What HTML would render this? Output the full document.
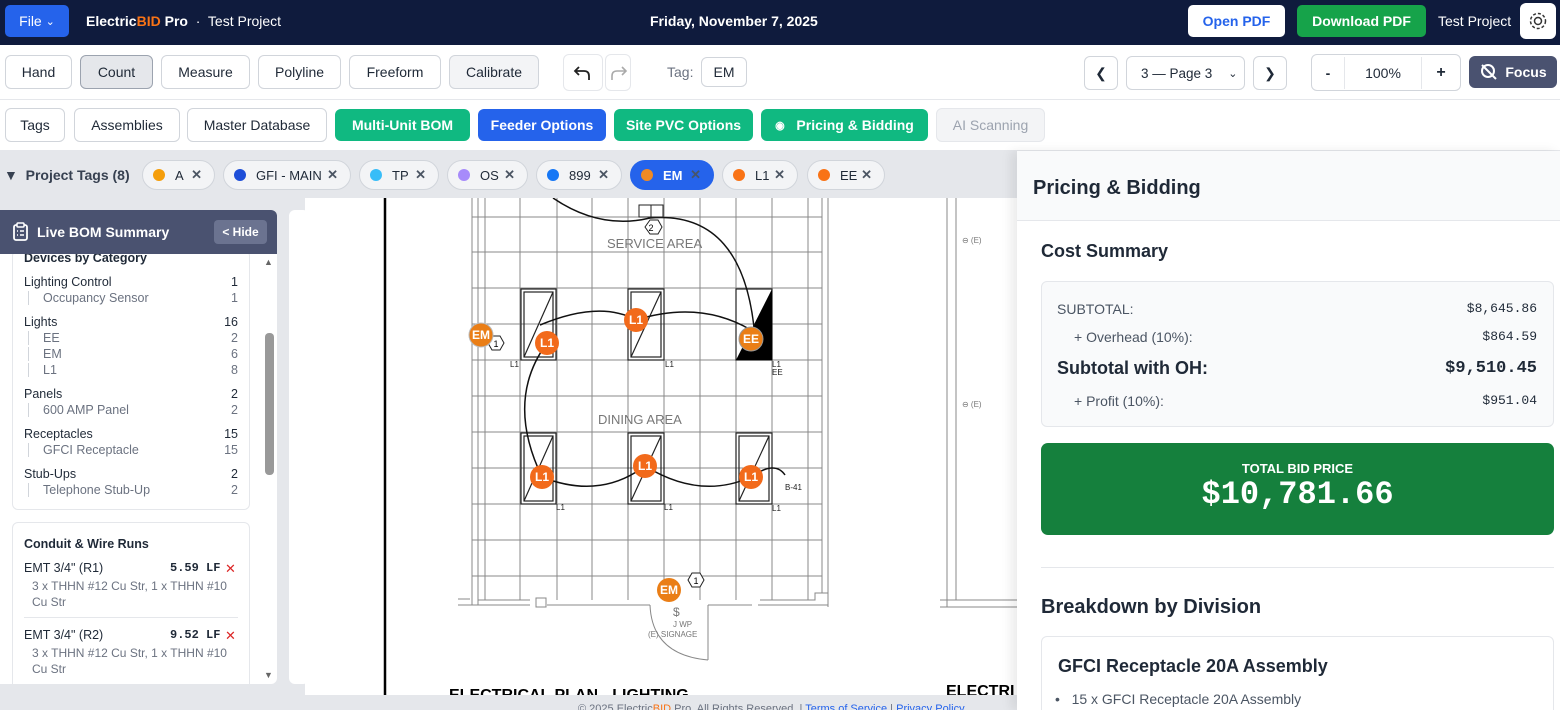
<!DOCTYPE html>
<html style="width:1560px;height:710px;overflow:hidden"><head><meta charset="utf-8"><style>
*{box-sizing:border-box;margin:0;padding:0}
body{width:1560px;height:710px;overflow:hidden;font-family:"Liberation Sans",sans-serif;background:#e5e7eb;position:relative;color:#1f2937}
.abs{position:absolute}
.hdr{left:0;top:0;width:1560px;height:45px;background:#0f1b3d;color:#fff}
.btn{position:absolute;height:34px;border:1px solid #d1d5db;border-radius:6px;background:#fff;font-size:14px;display:flex;align-items:center;justify-content:center;color:#1f2937;white-space:nowrap}
.gbtn{background:#10b981;color:#fff;border:none;font-weight:bold}
.pill{position:absolute;top:160px;height:30px;border:1px solid #d1d5db;border-radius:15px;background:#f3f4f6;font-size:13px;display:flex;align-items:center;padding-left:10px;color:#1f2937;white-space:nowrap}
.pill i{width:12px;height:12px;border-radius:50%;display:inline-block;margin-right:10px}
.pill b{margin-left:auto;margin-right:12px;font-size:13px;color:#4b5563}
.mono{font-family:"Liberation Mono",monospace}
.row{position:absolute;left:24px;width:214px;font-size:12.5px;display:flex;justify-content:space-between}
.sub{color:#6b7280;padding-left:14px;border-left:1px solid #d1d5db;margin-left:4px;width:210px}
</style></head><body>
<div class="abs hdr">
 <div class="abs" style="left:5px;top:5px;width:64px;height:32px;background:#2563eb;border-radius:5px;font-size:14px;display:flex;align-items:center;justify-content:center">File&nbsp;<span style="font-size:11px">&#8964;</span></div>
 <div class="abs" style="left:86px;top:13px;font-size:14px"><b>Electric<span style="color:#f97316">BID</span> Pro</b> &nbsp;·&nbsp; Test Project</div>
 <div class="abs" style="left:650px;top:13px;font-size:14px;font-weight:bold">Friday, November 7, 2025</div>
 <div class="abs" style="left:1188px;top:5px;width:97px;height:32px;background:#fff;border-radius:5px;color:#2563eb;font-weight:bold;font-size:14px;display:flex;align-items:center;justify-content:center">Open PDF</div>
 <div class="abs" style="left:1297px;top:5px;width:129px;height:32px;background:#16a34a;border-radius:5px;font-weight:bold;font-size:14px;display:flex;align-items:center;justify-content:center">Download PDF</div>
 <div class="abs" style="left:1438px;top:13px;font-size:14px">Test Project</div>
 <div class="abs" style="left:1520px;top:3px;width:36px;height:36px;background:#fff;border-radius:6px"><svg width="36" height="36"><circle cx="18" cy="18" r="3.5" fill="none" stroke="#333" stroke-width="1.5"/><circle cx="18" cy="18" r="7.5" fill="none" stroke="#333" stroke-width="1.5" stroke-dasharray="3 2"/></svg></div>
</div>
<div class="abs" style="left:0;top:45px;width:1560px;height:105px;background:#fff"></div>
<div class="abs" style="left:0;top:99px;width:1560px;height:1px;background:#e5e7eb"></div>
<div class="abs" style="left:0;top:150px;width:1560px;height:1px;background:#e5e7eb"></div>
<div class="btn" style="left:5px;top:55px;width:67px">Hand</div>
<div class="btn" style="left:80px;top:55px;width:73px;background:#e5e7eb;border-color:#9ca3af">Count</div>
<div class="btn" style="left:161px;top:55px;width:89px">Measure</div>
<div class="btn" style="left:258px;top:55px;width:83px">Polyline</div>
<div class="btn" style="left:349px;top:55px;width:92px">Freeform</div>
<div class="btn" style="left:449px;top:55px;width:90px;background:#f3f4f6">Calibrate</div>
<div class="btn" style="left:563px;top:54px;width:40px;height:37px;border-color:#e5e7eb"><svg width="20" height="20"><path d="M6 4 L2 8 L6 12 M2 8 H11 Q16 8 16 13 V17" fill="none" stroke="#222" stroke-width="1.8"/></svg></div>
<div class="btn" style="left:605px;top:54px;width:26px;height:37px;border-color:#e5e7eb"><svg width="20" height="20"><path d="M14 4 L18 8 L14 12 M18 8 H9 Q4 8 4 13 V17" fill="none" stroke="#aaa" stroke-width="1.6"/></svg></div>
<div class="abs" style="left:667px;top:64px;font-size:14px;color:#6b7280">Tag:</div>
<div class="btn" style="left:701px;top:57px;width:46px;height:30px">EM</div>
<div class="btn" style="left:1084px;top:56px;width:34px">&#10094;</div>
<div class="btn" style="left:1126px;top:56px;width:119px;justify-content:flex-start;padding-left:14px;font-size:13.5px">3 — Page 3<span style="margin-left:16px;font-size:11px">&#8964;</span></div>
<div class="btn" style="left:1253px;top:56px;width:34px">&#10095;</div>
<div class="btn" style="left:1311px;top:54px;width:150px;height:37px;justify-content:flex-start"><span style="width:32px;text-align:center;font-weight:bold">-</span><span style="width:1px;height:32px;background:#e5e7eb"></span><span style="width:76px;text-align:center">100%</span><span style="width:1px;height:32px;background:#e5e7eb"></span><span style="width:38px;text-align:center;font-weight:bold;font-size:16px">+</span></div>
<div class="btn" style="left:1469px;top:56px;width:88px;height:32px;background:#4a5270;border:none;color:#fff;font-weight:bold"><svg width="20" height="20" style="margin-right:6px"><circle cx="9" cy="9" r="6" fill="none" stroke="#fff" stroke-width="2"/><path d="M13 13 L17 17 M3 3 L15 15" stroke="#fff" stroke-width="2"/></svg>Focus</div>

<div class="btn" style="left:5px;top:108px;width:60px">Tags</div>
<div class="btn" style="left:74px;top:108px;width:106px">Assemblies</div>
<div class="btn" style="left:187px;top:108px;width:140px">Master Database</div>
<div class="btn gbtn" style="left:335px;top:109px;width:135px;height:32px">Multi-Unit BOM</div>
<div class="btn gbtn" style="left:478px;top:109px;width:128px;height:32px;background:#2563eb">Feeder Options</div>
<div class="btn gbtn" style="left:614px;top:109px;width:139px;height:32px">Site PVC Options</div>
<div class="btn gbtn" style="left:761px;top:109px;width:167px;height:32px"><span style="font-size:11px">&#9673;</span>&nbsp;&nbsp;&nbsp;Pricing &amp; Bidding</div>
<div class="btn" style="left:936px;top:108px;width:109px;background:#f3f4f6;color:#9ca3af;border-color:#e5e7eb">AI Scanning</div>

<div class="abs" style="left:4px;top:167px;font-size:14px;font-weight:bold;color:#374151">&#9660;&nbsp; Project Tags (8)</div>
<div class="pill" style="left:142px;width:73px"><i style="background:#f59e0b"></i>A<b>✕</b></div>
<div class="pill" style="left:223px;width:128px"><i style="background:#1d4ed8"></i>GFI - MAIN<b>✕</b></div>
<div class="pill" style="left:359px;width:80px"><i style="background:#38bdf8"></i>TP<b>✕</b></div>
<div class="pill" style="left:447px;width:81px"><i style="background:#a78bfa"></i>OS<b>✕</b></div>
<div class="pill" style="left:536px;width:86px"><i style="background:#1677f5"></i>899<b>✕</b></div>
<div class="pill" style="left:630px;width:84px;background:#2563eb;color:#fff;border-color:#2563eb;font-weight:bold"><i style="background:#f08a24"></i>EM<b style="color:#475569">✕</b></div>
<div class="pill" style="left:722px;width:76px"><i style="background:#f97316"></i>L1<b>✕</b></div>
<div class="pill" style="left:807px;width:78px"><i style="background:#f97316"></i>EE<b>✕</b></div>

<!-- left panel -->
<div class="abs" style="left:0;top:210px;width:277px;height:474px;background:#fff;border-radius:0 6px 6px 0"></div>
<div class="abs" style="left:289px;top:210px;width:20px;height:474px;background:#fff;border-radius:6px"></div>
<div class="abs" style="left:12px;top:250px;width:238px;height:260px;border:1px solid #e5e7eb;border-radius:6px"></div>
<div class="abs" style="left:24px;top:251px;font-size:12.5px;font-weight:bold">Devices by Category</div>
<div class="row" style="top:275px"><span>Lighting Control</span><span>1</span></div>
<div class="row sub" style="top:291px"><span>Occupancy Sensor</span><span>1</span></div>
<div class="row" style="top:315px"><span>Lights</span><span>16</span></div>
<div class="row sub" style="top:331px"><span>EE</span><span>2</span></div>
<div class="row sub" style="top:347px"><span>EM</span><span>6</span></div>
<div class="row sub" style="top:363px"><span>L1</span><span>8</span></div>
<div class="row" style="top:387px"><span>Panels</span><span>2</span></div>
<div class="row sub" style="top:403px"><span>600 AMP Panel</span><span>2</span></div>
<div class="row" style="top:427px"><span>Receptacles</span><span>15</span></div>
<div class="row sub" style="top:443px"><span>GFCI Receptacle</span><span>15</span></div>
<div class="row" style="top:467px"><span>Stub-Ups</span><span>2</span></div>
<div class="row sub" style="top:483px"><span>Telephone Stub-Up</span><span>2</span></div>
<div class="abs" style="left:12px;top:522px;width:238px;height:170px;border:1px solid #e5e7eb;border-radius:6px"></div>
<div class="abs" style="left:24px;top:537px;font-size:12.5px;font-weight:bold">Conduit &amp; Wire Runs</div>
<div class="abs" style="left:24px;top:561px;font-size:12.5px">EMT 3/4" (R1)</div>
<div class="abs mono" style="left:170px;top:561px;font-size:12px;font-weight:bold">5.59 LF</div>
<div class="abs" style="left:225px;top:561px;color:#dc2626;font-size:13px">✕</div>
<div class="abs" style="left:32px;top:578px;font-size:12px;color:#6b7280;width:200px;line-height:16px">3 x THHN #12 Cu Str, 1 x THHN #10 Cu Str</div>
<div class="abs" style="left:24px;top:617px;width:214px;height:1px;background:#e5e7eb"></div>
<div class="abs" style="left:24px;top:628px;font-size:12.5px">EMT 3/4" (R2)</div>
<div class="abs mono" style="left:170px;top:628px;font-size:12px;font-weight:bold">9.52 LF</div>
<div class="abs" style="left:225px;top:628px;color:#dc2626;font-size:13px">✕</div>
<div class="abs" style="left:32px;top:645px;font-size:12px;color:#6b7280;width:200px;line-height:16px">3 x THHN #12 Cu Str, 1 x THHN #10 Cu Str</div>
<div class="abs" style="left:0;top:684px;width:290px;height:11px;background:#e5e7eb"></div>
<div class="abs" style="left:265px;top:333px;width:9px;height:142px;background:#999;border-radius:4px"></div>
<div class="abs" style="left:264px;top:257px;font-size:9px;color:#666">▲</div>
<div class="abs" style="left:264px;top:670px;font-size:9px;color:#666">▼</div>
<div class="abs" style="left:0;top:210px;width:277px;height:44px;background:#4a5270;border-radius:0 6px 0 0;color:#fff">
 <svg class="abs" style="left:12px;top:12px" width="18" height="20"><rect x="2" y="3" width="13" height="15" rx="2" fill="none" stroke="#fff" stroke-width="1.8"/><rect x="5" y="1" width="7" height="4" rx="1" fill="#4a5270" stroke="#fff" stroke-width="1.5"/><path d="M5 9h1M8 9h4M5 13h1M8 13h4" stroke="#fff" stroke-width="1.5"/></svg>
 <div class="abs" style="left:37px;top:14px;font-weight:bold;font-size:14px">Live BOM Summary</div>
 <div class="abs" style="left:214px;top:10px;width:53px;height:24px;background:#6b7390;border-radius:4px;font-size:12px;font-weight:bold;display:flex;align-items:center;justify-content:center">&lt; Hide</div>
</div>

<!-- drawing -->
<svg class="abs" style="left:305px;top:198px" width="712" height="497">
<rect width="712" height="497" fill="#fff"/>
<g transform="translate(-305,-198)">
<line x1="385" y1="198" x2="385" y2="695" stroke="#000" stroke-width="2.5"/>
<g stroke="#888" stroke-width="1" fill="none">
<path d="M485 198V600M520 198V600M557 198V600M592 198V600M628 198V600M664 198V600M700 198V600M736 198V600M772 198V600M808 198V600"/>
<path d="M472 217H822M472 252H822M472 288H822M472 324H822M472 360H822M472 396H822M472 432H822M472 468H822M472 504H822M472 540H822M472 576H822"/>
<path d="M472 198V605M478 198V605M822 198V593M828 198V607M458 605H530M547 605H650M708 605H752M758 605H828M458 599H470M478 600H530M760 600H815V593H828"/>
<rect x="536" y="598" width="10" height="9" fill="#fff"/>
<path d="M708 605V660 M650 605 Q652 655 708 660"/>
<path d="M947 198V607M956 198V600M940 600H1017M940 607H1017"/>
</g>
<g fill="none" stroke="#222" stroke-width="1.2">
<rect x="521" y="289" width="35" height="71"/><rect x="524" y="292" width="29" height="65"/><path d="M524 357L553 292"/>
<rect x="628" y="289" width="36" height="71"/><rect x="631" y="292" width="30" height="65"/><path d="M631 357L661 292"/>
<rect x="736" y="289" width="36" height="71"/>
<rect x="521" y="433" width="35" height="71"/><rect x="524" y="436" width="29" height="65"/><path d="M524 501L553 436"/>
<rect x="628" y="433" width="36" height="71"/><rect x="631" y="436" width="30" height="65"/><path d="M631 501L661 436"/>
<rect x="736" y="433" width="36" height="71"/><rect x="739" y="436" width="30" height="65"/><path d="M739 501L769 436"/>
</g>
<path d="M736 360L772 289V360Z" fill="#000"/>
<g fill="none" stroke="#111" stroke-width="1.5">
<path d="M553 198 Q600 230 650 218 Q745 210 755 338"/>
<path d="M540 325 Q600 300 636 320 Q700 300 751 330"/>
<path d="M547 343 Q505 400 542 477 Q600 500 645 466 Q700 500 751 477 Q775 460 785 475"/>
</g>
<rect x="639" y="205" width="24" height="12" fill="#fff" stroke="#222"/>
<path d="M651 205V217" stroke="#222"/>
<polygon points="645,227 650,220 658,220 662,227 658,234 650,234" fill="#fff" stroke="#222"/>
<text x="651" y="231" font-size="9" text-anchor="middle" font-family="Liberation Sans">2</text>
<polygon points="488,343 492,336 500,336 504,343 500,350 492,350" fill="#fff" stroke="#222"/>
<text x="496" y="347" font-size="9" text-anchor="middle" font-family="Liberation Sans">1</text>
<polygon points="688,580 692,573 700,573 704,580 700,587 692,587" fill="#fff" stroke="#222"/>
<text x="696" y="584" font-size="9" text-anchor="middle" font-family="Liberation Sans">1</text>
<g font-family="Liberation Sans" fill="#777" font-size="13">
<text x="607" y="248">SERVICE AREA</text><text x="598" y="424">DINING AREA</text></g>
<g font-family="Liberation Sans" fill="#222" font-size="8">
<text x="510" y="367">L1</text><text x="665" y="367">L1</text><text x="772" y="367">L1</text><text x="772" y="375">EE</text>
<text x="556" y="510">L1</text><text x="664" y="510">L1</text><text x="772" y="511">L1</text><text x="785" y="490">B-41</text>
<text x="648" y="637" fill="#777">(E) SIGNAGE</text><text x="673" y="627" fill="#777">J WP</text><text x="673" y="616" fill="#777" font-size="12">$</text>
<text x="962" y="243" fill="#777">⊖ (E)</text><text x="962" y="407" fill="#777">⊖ (E)</text></g>
<g font-family="Liberation Sans" font-weight="bold" font-size="12" fill="#fff" text-anchor="middle">
<circle cx="481" cy="335" r="12" fill="#ea7e16" stroke="#bbb"/><text x="481" y="339">EM</text>
<circle cx="547" cy="343" r="12" fill="#f26a1b"/><text x="547" y="347">L1</text>
<circle cx="636" cy="320" r="12" fill="#f26a1b"/><text x="636" y="324">L1</text>
<circle cx="751" cy="339" r="12" fill="#ea7e16" stroke="#999"/><text x="751" y="343">EE</text>
<circle cx="542" cy="477" r="12" fill="#f26a1b"/><text x="542" y="481">L1</text>
<circle cx="645" cy="466" r="12" fill="#f26a1b"/><text x="645" y="470">L1</text>
<circle cx="751" cy="477" r="12" fill="#f26a1b"/><text x="751" y="481">L1</text>
<circle cx="669" cy="590" r="12" fill="#ea7e16"/><text x="669" y="594">EM</text></g>
<text x="449" y="700" font-family="Liberation Sans" font-weight="bold" font-size="16">ELECTRICAL PLAN - LIGHTING</text>
<text x="946" y="696" font-family="Liberation Sans" font-weight="bold" font-size="16">ELECTRI</text>
</g></svg>
<div class="abs" style="left:0;top:695px;width:1560px;height:15px;background:#e5e7eb;overflow:hidden">
<div class="abs" style="left:578px;top:8px;font-size:11px;color:#6b7280;white-space:nowrap">© 2025 Electric<span style="color:#f97316">BID</span> Pro. All Rights Reserved. | <span style="color:#2563eb">Terms of Service</span> | <span style="color:#2563eb">Privacy Policy</span></div>
</div>

<!-- right panel -->
<div class="abs" style="left:1017px;top:151px;width:543px;height:559px;background:#fff;box-shadow:-6px 0 10px rgba(0,0,0,0.08);overflow:hidden">
 <div class="abs" style="left:0;top:0;width:543px;height:70px;background:#f9fafb;border-bottom:1px solid #e5e7eb"></div>
 <div class="abs" style="left:16px;top:26px;font-size:20px;font-weight:bold">Pricing &amp; Bidding</div>
 <div class="abs" style="left:24px;top:90px;font-size:18px;font-weight:bold">Cost Summary</div>
 <div class="abs" style="left:24px;top:130px;width:513px;height:146px;background:#f9fafb;border:1px solid #e5e7eb;border-radius:6px"></div>
 <div class="abs" style="left:40px;top:150px;font-size:14px;color:#4b5563">SUBTOTAL:</div>
 <div class="abs mono" style="right:23px;top:150px;font-size:13px">$8,645.86</div>
 <div class="abs" style="left:57px;top:178px;font-size:14px;color:#4b5563">+ Overhead (10%):</div>
 <div class="abs mono" style="right:23px;top:178px;font-size:13px">$864.59</div>
 <div class="abs" style="left:40px;top:207px;font-size:18px;font-weight:bold">Subtotal with OH:</div>
 <div class="abs mono" style="right:23px;top:208px;font-size:17px;font-weight:bold">$9,510.45</div>
 <div class="abs" style="left:57px;top:242px;font-size:14px;color:#4b5563">+ Profit (10%):</div>
 <div class="abs mono" style="right:23px;top:242px;font-size:13px">$951.04</div>
 <div class="abs" style="left:24px;top:292px;width:513px;height:92px;background:#15803d;border-radius:7px;color:#fff;text-align:center">
  <div style="margin-top:18px;font-size:13px;font-weight:bold">TOTAL BID PRICE</div>
  <div class="mono" style="font-size:32px;font-weight:bold;margin-top:0">$10,781.66</div>
 </div>
 <div class="abs" style="left:24px;top:416px;width:513px;height:1px;background:#e5e7eb"></div>
 <div class="abs" style="left:24px;top:445px;font-size:20px;font-weight:bold">Breakdown by Division</div>
 <div class="abs" style="left:24px;top:485px;width:513px;height:100px;border:1px solid #e5e7eb;border-radius:6px"></div>
 <div class="abs" style="left:41px;top:505px;font-size:18px;font-weight:bold">GFCI Receptacle 20A Assembly</div>
 <div class="abs" style="left:38px;top:540px;font-size:14px;color:#4b5563">•&nbsp;&nbsp;&nbsp;15 x GFCI Receptacle 20A Assembly</div>
</div>
</body></html>
